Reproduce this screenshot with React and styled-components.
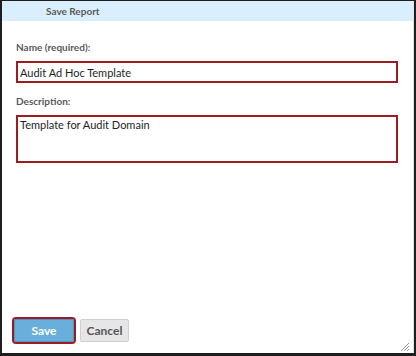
import React from 'react'
import styled, { createGlobalStyle } from 'styled-components'

const GlobalStyle = createGlobalStyle`
  html, body { margin: 0; padding: 0; background: #fff; }
  body { font-family: Lato, "Open Sans", sans-serif; }
`

const Dialog = styled.div`
  width: 416px;
  height: 356px;
  box-sizing: border-box;
  border-top: 1px solid #1e1e1e;
  border-left: 2px solid #1e1e1e;
  border-right: 2px solid #1e1e1e;
  border-bottom: 3px solid #1e1e1e;
  position: relative;
  display: flex;
`

const Panel = styled.div`
  flex: 1;
  display: flex;
  flex-direction: column;
  border-right: 1px solid #e2e2e2;
`

const Header = styled.div`
  height: 20px;
  background: #d9effd;
  display: flex;
  align-items: center;
  padding-left: 44px;
  font-size: 10px;
  font-weight: 700;
  color: #5a5a5a;
`

const Body = styled.div`
  flex: 1;
  display: flex;
  flex-direction: column;
  padding: 19px 15px 0 14px;
`

const Label = styled.label`
  font-size: 10px;
  line-height: 14px;
  font-weight: 700;
  color: #5a5a5a;
  margin-bottom: 7px;
  margin-top: ${p => p.$gap || 0}px;
`

const Field = styled.div`
  box-sizing: border-box;
  width: 382px;
  height: ${p => p.$h}px;
  border: 2px solid #9e1b20;
  padding: ${p => p.$multi ? '1px 2px' : '0 2px'};
  display: flex;
  align-items: ${p => p.$multi ? 'flex-start' : 'center'};
  font-size: 11px;
  color: #1e1e1e;
`

const Footer = styled.div`
  margin-top: auto;
  margin-left: -2px;
  display: flex;
  align-items: center;
  gap: 6px;
  padding-bottom: 11px;
`

const Button = styled.button`
  box-sizing: border-box;
  height: 23px;
  width: ${p => p.$w}px;
  border-radius: 2px;
  font-family: inherit;
  font-size: 12px;
  font-weight: 700;
  padding: 0;
  cursor: pointer;
  border: 1px solid ${p => p.$primary ? '#4d95c7' : '#cfcfcf'};
  background: ${p => p.$primary ? '#68afdc' : '#e6e6e6'};
  color: ${p => p.$primary ? '#fff' : '#555'};
  outline: ${p => p.$primary ? '2px solid #9e1b20' : 'none'};
  outline-offset: 0;
`

const Grip = styled.svg`
  position: absolute;
  right: 4px;
  bottom: 1px;
`

export default function App() {
  return (
    <>
      <GlobalStyle />
      <Dialog>
        <Panel>
          <Header>Save Report</Header>
          <Body>
            <Label>Name (required):</Label>
            <Field $h={22}>Audit Ad Hoc Template</Field>
            <Label $gap={11}>Description:</Label>
            <Field $h={48} $multi>Template for Audit Domain</Field>
            <Footer>
              <Button $primary $w={60}>Save</Button>
              <Button $w={49}>Cancel</Button>
            </Footer>
          </Body>
        </Panel>
        <Grip width="10" height="10" viewBox="0 0 10 10">
          <path d="M9 1 L1 9 M9 4 L4 9 M9 7 L7 9" stroke="#9a9a9a" strokeWidth="1" />
        </Grip>
      </Dialog>
    </>
  )
}
